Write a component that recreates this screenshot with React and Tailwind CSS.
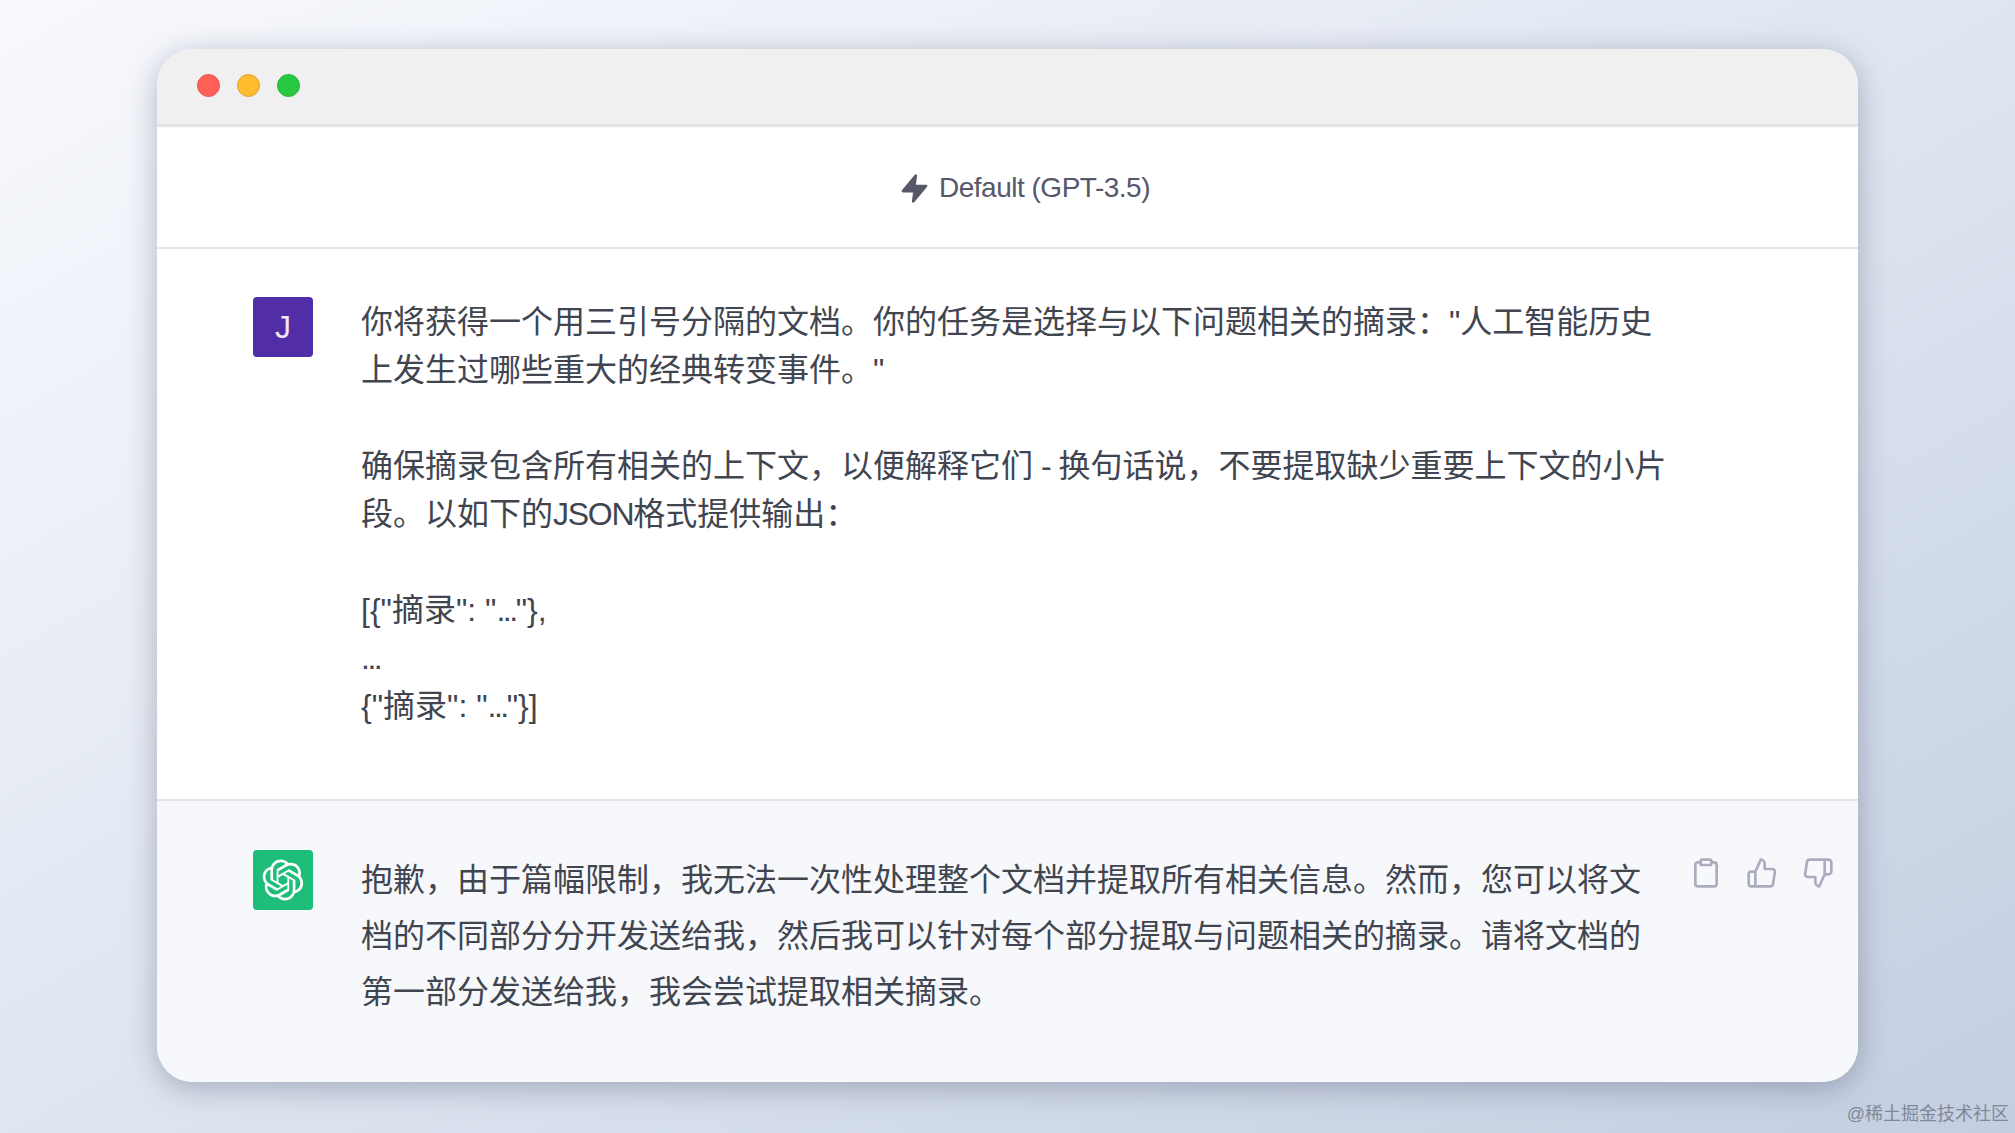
import { FiClipboard, FiThumbsUp, FiThumbsDown, FiZap } from "react-icons/fi"

const FONT = "font-['Liberation_Sans','Noto_Sans_CJK_SC',sans-serif]"

function OpenAILogo() {
  return (
    <svg width="42" height="42" viewBox="0 0 41 41" fill="currentColor" className="text-white">
      <path d="M37.5324 16.8707C37.9808 15.5241 38.1363 14.0974 37.9886 12.6859C37.8409 11.2744 37.3934 9.91076 36.676 8.68622C35.6126 6.83404 33.9882 5.3676 32.0373 4.4985C30.0864 3.62941 27.9098 3.40259 25.8215 3.85078C24.8796 2.7893 23.7219 1.94125 22.4257 1.36341C21.1295 0.785575 19.7249 0.491269 18.3058 0.500197C16.1708 0.495044 14.0893 1.16803 12.3614 2.42214C10.6335 3.67624 9.34853 5.44666 8.6917 7.47815C7.30085 7.76286 5.98686 8.3414 4.8377 9.17505C3.68854 10.0087 2.73073 11.0782 2.02839 12.312C0.956464 14.1591 0.498905 16.2988 0.721698 18.4228C0.944492 20.5467 1.83612 22.5449 3.268 24.1293C2.81966 25.4759 2.66413 26.9026 2.81182 28.3141C2.95951 29.7256 3.40701 31.0892 4.12437 32.3138C5.18791 34.1659 6.8123 35.6322 8.76321 36.5013C10.7141 37.3704 12.8907 37.5973 14.9789 37.1492C15.9208 38.2107 17.0786 39.0587 18.3747 39.6366C19.6709 40.2144 21.0755 40.5087 22.4946 40.4998C24.6307 40.5054 26.7133 39.8321 28.4418 38.5772C30.1704 37.3223 31.4556 35.5506 32.1119 33.5179C33.5027 33.2332 34.8167 32.6547 35.9659 31.821C37.115 30.9874 38.0728 29.9178 38.7752 28.684C39.8458 26.8371 40.3023 24.6979 40.0789 22.5748C39.8556 20.4517 38.9639 18.4544 37.5324 16.8707ZM22.4978 37.8849C20.7443 37.8874 19.0459 37.2733 17.6994 36.1501C17.7601 36.117 17.8666 36.0586 17.936 36.0161L25.9004 31.4156C26.1003 31.3019 26.2663 31.137 26.3813 30.9378C26.4964 30.7386 26.5563 30.5124 26.5549 30.2825V19.0542L29.9213 20.998C29.9389 21.0068 29.9541 21.0198 29.9656 21.0359C29.977 21.052 29.9842 21.0707 29.9867 21.0902V30.3889C29.9842 32.375 29.1946 34.2791 27.7909 35.6841C26.3872 37.0892 24.4838 37.8806 22.4978 37.8849ZM6.39227 31.0064C5.51397 29.4888 5.19742 27.7107 5.49804 25.9832C5.55718 26.0187 5.66048 26.0818 5.73461 26.1244L13.699 30.7248C13.8975 30.8408 14.1233 30.902 14.3532 30.902C14.583 30.902 14.8088 30.8408 15.0073 30.7248L24.731 25.1103V28.9979C24.7321 29.0177 24.7283 29.0376 24.7199 29.0556C24.7115 29.0736 24.6988 29.0893 24.6829 29.1012L16.6317 33.7497C14.9096 34.7416 12.8643 35.0097 10.9447 34.4954C9.02506 33.9811 7.38785 32.7263 6.39227 31.0064ZM4.29707 13.6194C5.17156 12.0998 6.55279 10.9364 8.19885 10.3327C8.19885 10.4013 8.19491 10.5228 8.19491 10.6071V19.808C8.19351 20.0378 8.25334 20.2638 8.36823 20.4629C8.48312 20.6619 8.64893 20.8267 8.84863 20.9404L18.5723 26.5542L15.206 28.4979C15.1894 28.5089 15.1703 28.5155 15.1505 28.5173C15.1307 28.5191 15.1107 28.516 15.0924 28.5082L7.04046 23.8557C5.32135 22.8601 4.06716 21.2235 3.55289 19.3046C3.03862 17.3858 3.30624 15.3413 4.29707 13.6194ZM31.955 20.0556L22.2312 14.4411L25.5976 12.4981C25.6142 12.4872 25.6333 12.4805 25.6531 12.4787C25.6729 12.4769 25.6928 12.4801 25.7111 12.4879L33.7631 17.1364C34.9967 17.849 36.0017 18.8982 36.6606 20.1613C37.3194 21.4244 37.6047 22.849 37.4832 24.2684C37.3617 25.6878 36.8382 27.0432 35.9743 28.1759C35.1103 29.3086 33.9415 30.1717 32.6047 30.6641C32.6047 30.5947 32.6047 30.4733 32.6047 30.3889V21.188C32.6066 20.9586 32.5474 20.7328 32.4332 20.5338C32.319 20.3348 32.154 20.1698 31.955 20.0556ZM35.3055 15.0128C35.2464 14.9765 35.1431 14.9142 35.069 14.8717L27.1045 10.2712C26.906 10.1554 26.6803 10.0943 26.4504 10.0943C26.2206 10.0943 25.9948 10.1554 25.7963 10.2712L16.0726 15.8858V11.9982C16.0715 11.9783 16.0753 11.9585 16.0837 11.9405C16.0921 11.9225 16.1048 11.9068 16.1207 11.8949L24.1719 7.25025C25.4053 6.53903 26.8158 6.19376 28.2383 6.25482C29.6608 6.31589 31.0364 6.78077 32.2044 7.59508C33.3723 8.40939 34.2842 9.53945 34.8334 10.8531C35.3826 12.1667 35.5464 13.6095 35.3055 15.0128ZM14.2424 21.9419L10.8752 19.9981C10.8576 19.9893 10.8423 19.9763 10.8309 19.9602C10.8195 19.9441 10.8122 19.9254 10.8098 19.9058V10.6071C10.8107 9.18295 11.2173 7.78848 11.9819 6.58696C12.7466 5.38544 13.8377 4.42659 15.1275 3.82264C16.4173 3.21869 17.8524 2.99464 19.2649 3.1767C20.6775 3.35876 22.0089 3.93941 23.1034 4.85067C23.0427 4.88379 22.937 4.94215 22.8668 4.98473L14.9024 9.58517C14.7025 9.69878 14.5366 9.86356 14.4215 10.0626C14.3065 10.2616 14.2466 10.4877 14.2479 10.7175L14.2424 21.9419ZM16.071 17.9991L20.4018 15.4978L24.7325 17.9975V22.9985L20.4018 25.4983L16.071 22.9985V17.9991Z" />
    </svg>
  )
}

const Dots = () => <span className="tracking-[-2.5px]">...</span>

export default function App() {
  return (
    <div className={`relative h-[1133px] w-[2015px] overflow-hidden bg-gradient-to-br from-[#f8f9fd] via-[#dfe6f1] to-[#c3cee1] pl-[157px] pt-[49px] ${FONT}`}>
      <div className="flex h-[1033px] w-[1701px] flex-col overflow-hidden rounded-[36px] bg-white shadow-[0_6px_30px_rgba(80,85,110,0.4)]">
        {/* title bar */}
        <div className="flex h-[78px] shrink-0 items-center gap-[17px] border-b-[3px] border-[#e3e3e3] bg-[#f0f0f0] pb-[3px] pl-[40px]">
          <span className="h-[23px] w-[23px] rounded-full border border-[#e5534c] bg-[#ff5f57]" />
          <span className="h-[23px] w-[23px] rounded-full border border-[#e0a028] bg-[#febc2e]" />
          <span className="h-[23px] w-[23px] rounded-full border border-[#24b23a] bg-[#28c840]" />
        </div>

        {/* model header */}
        <div className="flex h-[122px] shrink-0 items-center justify-center gap-[9px] border-b-2 border-[#e5e5e5] pl-[34px] pt-[2px] text-[#565869]">
          <FiZap size={31} fill="currentColor" />
          <span className="text-[28px] tracking-[-0.5px]">Default (GPT-3.5)</span>
        </div>

        {/* user message */}
        <div className="flex h-[552px] shrink-0 gap-[48px] border-b-2 border-[#e5e5e5] pl-[96px] pt-[48px]">
          <div className="flex h-[60px] w-[60px] shrink-0 items-center justify-center rounded-[4px] bg-[#512da8] text-[32px] text-[#f3e5f5]">
            J
          </div>
          <div className="pt-[1px] text-[32px] leading-[48px] whitespace-nowrap text-[#40454f]">
            <p>你将获得一个用三引号分隔的文档。你的任务是选择与以下问题相关的摘录："人工智能历史</p>
            <p>上发生过哪些重大的经典转变事件。"</p>
            <p className="mt-[48px]">确保摘录包含所有相关的上下文，以便解释它们<span className="tracking-[-1px]"> - </span>换句话说，不要提取缺少重要上下文的小片</p>
            <p>段。以如下的<span className="tracking-[-1.25px]">JSON</span>格式提供输出：</p>
            <p className="mt-[48px]">[{'{'}"摘录": "<Dots />"{'}'},</p>
            <p><Dots /></p>
            <p>{'{'}"摘录": "<Dots />"{'}'}]</p>
          </div>
        </div>

        {/* assistant message */}
        <div className="relative flex flex-1 gap-[48px] bg-[#f7f8fb] pl-[96px] pt-[49px]">
          <div className="flex h-[60px] w-[60px] shrink-0 items-center justify-center rounded-[4px] bg-[#1fbd7a]">
            <OpenAILogo />
          </div>
          <div className="pt-[2px] text-[32px] leading-[56px] whitespace-nowrap text-[#40454f]">
            <p>抱歉，由于篇幅限制，我无法一次性处理整个文档并提取所有相关信息。然而，您可以将文</p>
            <p>档的不同部分分开发送给我，然后我可以针对每个部分提取与问题相关的摘录。请将文档的</p>
            <p>第一部分发送给我，我会尝试提取相关摘录。</p>
          </div>
          <div className="absolute right-[24px] top-[56px] flex gap-[24px] text-[#acacbe]">
            <FiClipboard size={32} />
            <FiThumbsUp size={32} />
            <FiThumbsDown size={32} />
          </div>
        </div>
      </div>
      <span className="absolute bottom-[5px] right-[6px] text-[18px] text-[#7f8898]">@稀土掘金技术社区</span>
    </div>
  )
}
